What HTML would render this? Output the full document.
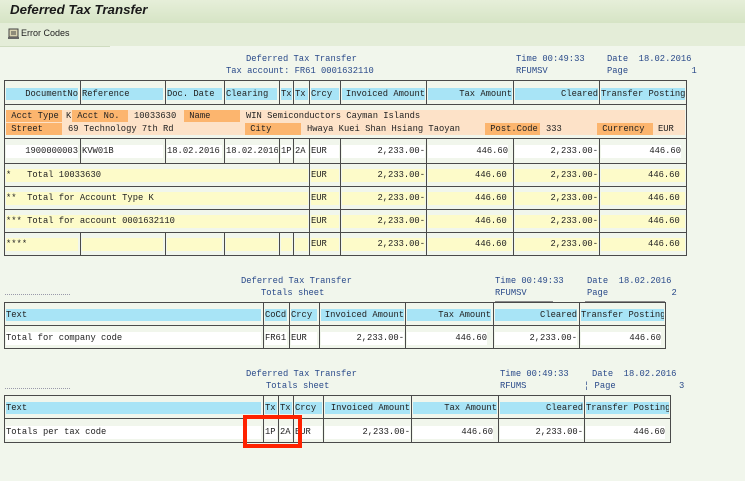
<!DOCTYPE html>
<html><head><meta charset="utf-8"><style>
*{margin:0;padding:0;box-sizing:border-box}
body{width:745px;height:481px;overflow:hidden;background:#f1f6ec;position:relative;font-family:"Liberation Mono",monospace}
div{position:absolute}
.t{font-size:8.8px;line-height:12px;white-space:pre;color:#222;overflow:hidden}
.bl{color:#2a4a8a}
.hb{background:#a8e4f6;height:12px}
.yb{background:#fdfbc9;height:13px}
.wb{background:#fff;height:13px}
.v{width:1px;background:#4a4a4a}
.h{height:1px;background:#4a4a4a}
.r{text-align:right}
.lab{background:#fcb56e;height:12px}
</style></head><body>
<div style="left:0;top:0;width:745px;height:23px;background:linear-gradient(#e6efd9,#d6e4c5)"></div>
<div style="left:10px;top:2px;font:bold italic 13.3px 'Liberation Sans',sans-serif;color:#1a1a1a">Deferred Tax Transfer</div>
<div style="left:0;top:23px;width:745px;height:23px;background:#e4edd8"></div>
<div style="left:0;top:46px;width:110px;height:1px;background:#cfdcc0"></div>
<svg style="position:absolute;left:8px;top:28px" width="12" height="12"><rect x="1" y="1" width="9" height="8" fill="#d8d2b0" stroke="#444"/><line x1="3" y1="4" x2="8" y2="4" stroke="#444"/><line x1="3" y1="6" x2="8" y2="6" stroke="#444"/><rect x="0" y="9" width="11" height="2" fill="#666"/></svg>
<div style="left:21px;top:28px;font:9px 'Liberation Sans',sans-serif;color:#222">Error Codes</div>

<div class="t bl" style="left:246px;top:53px">Deferred Tax Transfer</div>
<div class="t bl" style="left:226px;top:65px">Tax account: FR61 0001632110</div>
<div class="t bl" style="left:516px;top:53px">Time 00:49:33</div>
<div class="t bl" style="left:607px;top:53px">Date  18.02.2016</div>
<div class="t bl" style="left:516px;top:65px">RFUMSV</div>
<div class="t bl" style="left:607px;top:65px">Page            1</div>

<div style="left:4px;top:80px;width:683px;height:176px;border:1px solid #4a4a4a"></div>
<div class="h" style="left:4px;top:104px;width:683px"></div>
<div class="h" style="left:4px;top:138px;width:683px"></div>
<div class="h" style="left:4px;top:163px;width:683px"></div>
<div class="h" style="left:4px;top:186px;width:683px"></div>
<div class="h" style="left:4px;top:209px;width:683px"></div>
<div class="h" style="left:4px;top:232px;width:683px"></div>
<div class="t hb r" style="left:6px;top:88px;width:72px">DocumentNo</div>
<div class="t hb" style="left:82px;top:88px;width:81px">Reference</div>
<div class="t hb" style="left:167px;top:88px;width:55px">Doc. Date</div>
<div class="t hb" style="left:226px;top:88px;width:51px">Clearing</div>
<div class="t hb" style="left:281px;top:88px;width:11px">Tx</div>
<div class="t hb" style="left:295px;top:88px;width:13px">Tx</div>
<div class="t hb" style="left:311px;top:88px;width:28px">Crcy</div>
<div class="t hb r" style="left:342px;top:88px;width:83px">Invoiced Amount</div>
<div class="t hb r" style="left:428px;top:88px;width:84px">Tax Amount</div>
<div class="t hb r" style="left:515px;top:88px;width:83px">Cleared</div>
<div class="t hb r" style="left:601px;top:88px;width:84px">Transfer Posting</div>
<div style="left:6px;top:110px;width:679px;height:25px;background:#fde2c8"></div>
<div class="t lab" style="left:6px;top:110px;width:56px"> Acct Type</div>
<div class="t" style="left:66px;top:110px">K</div>
<div class="t lab" style="left:72px;top:110px;width:56px"> Acct No.</div>
<div class="t" style="left:134px;top:110px">10033630</div>
<div class="t lab" style="left:184px;top:110px;width:56px"> Name</div>
<div class="t" style="left:246px;top:110px">WIN Semiconductors Cayman Islands</div>
<div class="t lab" style="left:6px;top:123px;width:56px"> Street</div>
<div class="t" style="left:68px;top:123px">69 Technology 7th Rd</div>
<div class="t lab" style="left:245px;top:123px;width:56px"> City</div>
<div class="t" style="left:307px;top:123px">Hwaya Kuei Shan Hsiang Taoyan</div>
<div class="t lab" style="left:485px;top:123px;width:55px"> Post.Code</div>
<div class="t" style="left:546px;top:123px">333</div>
<div class="t lab" style="left:597px;top:123px;width:56px"> Currency</div>
<div class="t" style="left:658px;top:123px">EUR</div>
<div class="t wb r" style="left:6px;top:145px;width:72px">1900000003</div>
<div class="t wb" style="left:82px;top:145px;width:81px">KVW01B</div>
<div class="t wb" style="left:167px;top:145px;width:55px">18.02.2016</div>
<div class="t wb" style="left:226px;top:145px;width:52px">18.02.2016</div>
<div class="t wb" style="left:281px;top:145px;width:11px">1P</div>
<div class="t wb" style="left:295px;top:145px;width:13px">2A</div>
<div class="t wb" style="left:311px;top:145px;width:28px">EUR</div>
<div class="t wb r" style="left:342px;top:145px;width:83px">2,233.00-</div>
<div class="t wb r" style="left:428px;top:145px;width:80px">446.60</div>
<div class="t wb r" style="left:515px;top:145px;width:83px">2,233.00-</div>
<div class="t wb r" style="left:601px;top:145px;width:80px">446.60</div>
<div class="t yb" style="left:6px;top:169px;width:302px">*   Total 10033630</div>
<div class="t yb" style="left:6px;top:192px;width:302px">**  Total for Account Type K</div>
<div class="t yb" style="left:6px;top:215px;width:302px">*** Total for account 0001632110</div>
<div class="t yb" style="left:6px;top:238px;width:72px">****</div>
<div class="yb" style="left:82px;top:238px;width:81px"></div>
<div class="yb" style="left:167px;top:238px;width:55px"></div>
<div class="yb" style="left:226px;top:238px;width:52px"></div>
<div class="yb" style="left:281px;top:238px;width:11px"></div>
<div class="yb" style="left:295px;top:238px;width:13px"></div>
<div class="t yb" style="left:311px;top:169px;width:28px">EUR</div>
<div class="t yb" style="left:311px;top:192px;width:28px">EUR</div>
<div class="t yb" style="left:311px;top:215px;width:28px">EUR</div>
<div class="t yb" style="left:311px;top:238px;width:28px">EUR</div>
<div class="t yb r" style="left:342px;top:169px;width:83px">2,233.00-</div>
<div class="t yb r" style="left:342px;top:192px;width:83px">2,233.00-</div>
<div class="t yb r" style="left:342px;top:215px;width:83px">2,233.00-</div>
<div class="t yb r" style="left:342px;top:238px;width:83px">2,233.00-</div>
<div class="t yb r" style="left:428px;top:169px;width:84px">446.60 </div>
<div class="t yb r" style="left:428px;top:192px;width:84px">446.60 </div>
<div class="t yb r" style="left:428px;top:215px;width:84px">446.60 </div>
<div class="t yb r" style="left:428px;top:238px;width:84px">446.60 </div>
<div class="t yb r" style="left:515px;top:169px;width:83px">2,233.00-</div>
<div class="t yb r" style="left:515px;top:192px;width:83px">2,233.00-</div>
<div class="t yb r" style="left:515px;top:215px;width:83px">2,233.00-</div>
<div class="t yb r" style="left:515px;top:238px;width:83px">2,233.00-</div>
<div class="t yb r" style="left:601px;top:169px;width:84px">446.60 </div>
<div class="t yb r" style="left:601px;top:192px;width:84px">446.60 </div>
<div class="t yb r" style="left:601px;top:215px;width:84px">446.60 </div>
<div class="t yb r" style="left:601px;top:238px;width:84px">446.60 </div>
<div class="v" style="left:80px;top:80px;height:24px"></div>
<div class="v" style="left:165px;top:80px;height:24px"></div>
<div class="v" style="left:224px;top:80px;height:24px"></div>
<div class="v" style="left:279px;top:80px;height:24px"></div>
<div class="v" style="left:293px;top:80px;height:24px"></div>
<div class="v" style="left:309px;top:80px;height:24px"></div>
<div class="v" style="left:340px;top:80px;height:24px"></div>
<div class="v" style="left:426px;top:80px;height:24px"></div>
<div class="v" style="left:513px;top:80px;height:24px"></div>
<div class="v" style="left:599px;top:80px;height:24px"></div>
<div class="v" style="left:80px;top:138px;height:25px"></div>
<div class="v" style="left:165px;top:138px;height:25px"></div>
<div class="v" style="left:224px;top:138px;height:25px"></div>
<div class="v" style="left:279px;top:138px;height:25px"></div>
<div class="v" style="left:293px;top:138px;height:25px"></div>
<div class="v" style="left:80px;top:232px;height:23px"></div>
<div class="v" style="left:165px;top:232px;height:23px"></div>
<div class="v" style="left:224px;top:232px;height:23px"></div>
<div class="v" style="left:279px;top:232px;height:23px"></div>
<div class="v" style="left:293px;top:232px;height:23px"></div>
<div class="v" style="left:309px;top:138px;height:117px"></div>
<div class="v" style="left:340px;top:138px;height:117px"></div>
<div class="v" style="left:426px;top:138px;height:117px"></div>
<div class="v" style="left:513px;top:138px;height:117px"></div>
<div class="v" style="left:599px;top:138px;height:117px"></div>

<div class="t bl" style="left:241px;top:275px">Deferred Tax Transfer</div>
<div class="t bl" style="left:261px;top:287px">Totals sheet</div>
<div class="t bl" style="left:495px;top:275px">Time 00:49:33</div>
<div class="t bl" style="left:587px;top:275px">Date  18.02.2016</div>
<div class="t bl" style="left:495px;top:287px">RFUMSV</div>
<div class="t bl" style="left:587px;top:287px">Page            2</div>
<div style="left:5px;top:294px;width:65px;height:1px;border-top:1px dotted #99a"></div>
<div style="left:495px;top:301px;width:58px;height:1px;background:#8a8a8a"></div>
<div style="left:585px;top:301px;width:80px;height:1px;background:#8a8a8a"></div>
<div style="left:4px;top:302px;width:662px;height:47px;border:1px solid #4a4a4a"></div>
<div class="h" style="left:4px;top:325px;width:662px"></div>
<div class="t hb" style="left:6px;top:309px;width:255px">Text</div>
<div class="t hb" style="left:265px;top:309px;width:22px">CoCd</div>
<div class="t hb" style="left:291px;top:309px;width:26px">Crcy</div>
<div class="t hb r" style="left:321px;top:309px;width:83px">Invoiced Amount</div>
<div class="t hb r" style="left:407px;top:309px;width:84px">Tax Amount</div>
<div class="t hb r" style="left:495px;top:309px;width:82px">Cleared</div>
<div class="t hb r" style="left:581px;top:309px;width:83px">Transfer Posting</div>
<div class="t wb" style="left:6px;top:332px;width:255px">Total for company code</div>
<div class="t wb" style="left:265px;top:332px;width:22px">FR61</div>
<div class="t wb" style="left:291px;top:332px;width:26px">EUR</div>
<div class="t wb r" style="left:321px;top:332px;width:83px">2,233.00-</div>
<div class="t wb r" style="left:407px;top:332px;width:80px">446.60</div>
<div class="t wb r" style="left:495px;top:332px;width:82px">2,233.00-</div>
<div class="t wb r" style="left:581px;top:332px;width:80px">446.60</div>
<div class="v" style="left:263px;top:302px;height:46px"></div>
<div class="v" style="left:289px;top:302px;height:46px"></div>
<div class="v" style="left:319px;top:302px;height:46px"></div>
<div class="v" style="left:405px;top:302px;height:46px"></div>
<div class="v" style="left:493px;top:302px;height:46px"></div>
<div class="v" style="left:579px;top:302px;height:46px"></div>

<div class="t bl" style="left:246px;top:368px">Deferred Tax Transfer</div>
<div class="t bl" style="left:266px;top:380px">Totals sheet</div>
<div class="t bl" style="left:500px;top:368px">Time 00:49:33</div>
<div class="t bl" style="left:592px;top:368px">Date  18.02.2016</div>
<div class="t bl" style="left:500px;top:380px">RFUMS</div>
<div class="t bl" style="left:584px;top:380px">¦ Page            3</div>
<div style="left:5px;top:388px;width:65px;height:1px;border-top:1px dotted #99a"></div>
<div style="left:4px;top:395px;width:667px;height:48px;border:1px solid #4a4a4a"></div>
<div class="h" style="left:4px;top:418px;width:667px"></div>
<div class="t hb" style="left:6px;top:402px;width:255px">Text</div>
<div class="t hb" style="left:265px;top:402px;width:12px">Tx</div>
<div class="t hb" style="left:280px;top:402px;width:12px">Tx</div>
<div class="t hb" style="left:295px;top:402px;width:27px">Crcy</div>
<div class="t hb r" style="left:325px;top:402px;width:85px">Invoiced Amount</div>
<div class="t hb r" style="left:413px;top:402px;width:84px">Tax Amount</div>
<div class="t hb r" style="left:500px;top:402px;width:83px">Cleared</div>
<div class="t hb r" style="left:586px;top:402px;width:83px">Transfer Posting</div>
<div class="t wb" style="left:6px;top:426px;width:255px">Totals per tax code</div>
<div class="t wb" style="left:265px;top:426px;width:12px">1P</div>
<div class="t wb" style="left:280px;top:426px;width:12px">2A</div>
<div class="t wb" style="left:295px;top:426px;width:27px">EUR</div>
<div class="t wb r" style="left:325px;top:426px;width:85px">2,233.00-</div>
<div class="t wb r" style="left:413px;top:426px;width:80px">446.60</div>
<div class="t wb r" style="left:500px;top:426px;width:83px">2,233.00-</div>
<div class="t wb r" style="left:586px;top:426px;width:79px">446.60</div>
<div class="v" style="left:263px;top:395px;height:47px"></div>
<div class="v" style="left:278px;top:395px;height:47px"></div>
<div class="v" style="left:293px;top:395px;height:47px"></div>
<div class="v" style="left:323px;top:395px;height:47px"></div>
<div class="v" style="left:411px;top:395px;height:47px"></div>
<div class="v" style="left:498px;top:395px;height:47px"></div>
<div class="v" style="left:584px;top:395px;height:47px"></div>
<div style="left:243px;top:415px;width:59px;height:33px;border:4px solid #ff2200"></div>
</body></html>
